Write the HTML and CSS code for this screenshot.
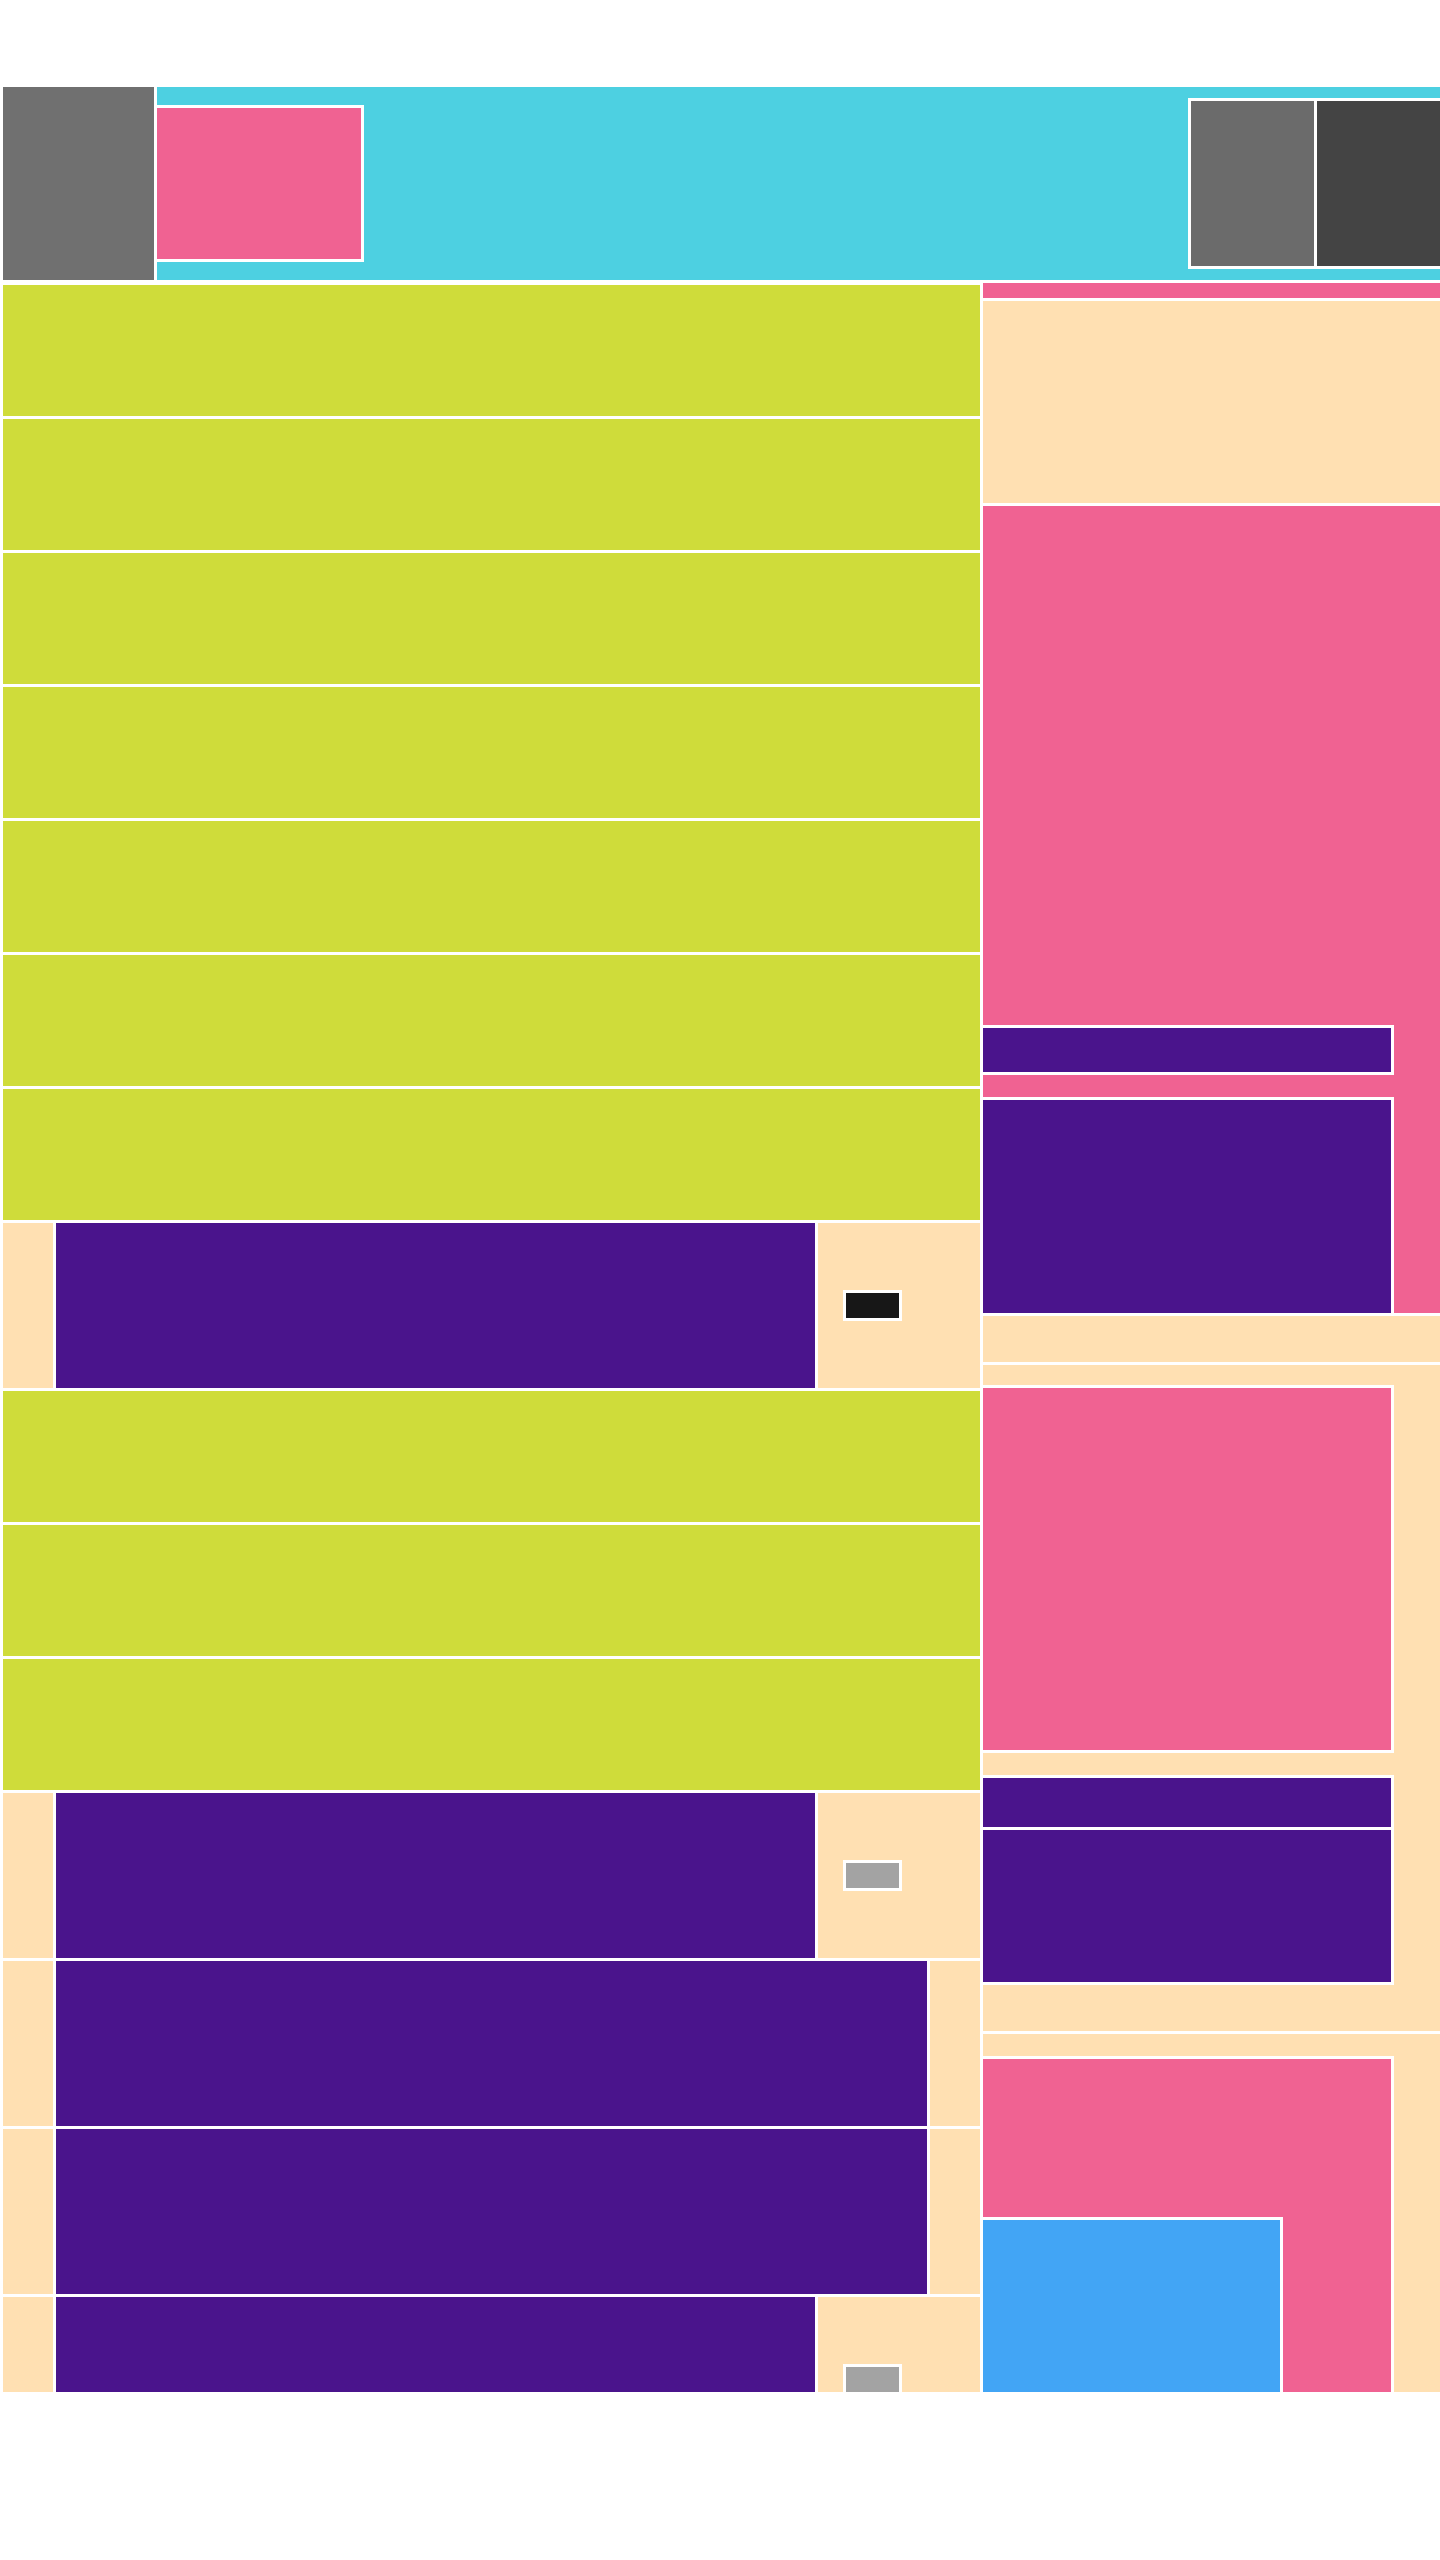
FILE: index.html
```html
<!DOCTYPE html>
<html lang="en">
<head>
  <meta charset="UTF-8">
  <meta name="viewport" content="width=device-width, initial-scale=1.0">
  <title>Layout</title>
  <link rel="stylesheet" href="styles.css">
</head>
<body>
  <div class="page">
    <header class="header">
      <div class="logo"></div>
      <div class="nav">
        <div class="nav-brand"></div>
        <div class="nav-actions">
          <div class="btn btn-light"></div>
          <div class="btn btn-dark"></div>
        </div>
      </div>
    </header>

    <main class="main">
      <div class="list">
        <div class="row-lime"></div>
        <div class="row-lime"></div>
        <div class="row-lime"></div>
        <div class="row-lime"></div>
        <div class="row-lime"></div>
        <div class="row-lime"></div>
        <div class="row-lime"></div>

        <div class="row-item">
          <div class="item-side"></div>
          <div class="item-body"></div>
          <div class="item-meta"><span class="tag tag-black"></span></div>
        </div>

        <div class="row-lime"></div>
        <div class="row-lime"></div>
        <div class="row-lime"></div>

        <div class="row-item">
          <div class="item-side"></div>
          <div class="item-body"></div>
          <div class="item-meta"><span class="tag tag-grey"></span></div>
        </div>

        <div class="row-item">
          <div class="item-side"></div>
          <div class="item-body item-body-wide"></div>
          <div class="item-side"></div>
        </div>

        <div class="row-item">
          <div class="item-side"></div>
          <div class="item-body item-body-wide"></div>
          <div class="item-side"></div>
        </div>

        <div class="row-item">
          <div class="item-side"></div>
          <div class="item-body"></div>
          <div class="item-meta"><span class="tag tag-grey"></span></div>
        </div>
      </div>

      <aside class="sidebar">
        <div class="side-strip"></div>
        <div class="side-peach side-intro"></div>

        <div class="side-pink side-feature">
          <div class="card card-purple card-bar"></div>
          <div class="card card-purple card-feature"></div>
        </div>

        <div class="side-peach side-spacer"></div>

        <div class="side-peach side-group">
          <div class="card card-pink card-hero"></div>
          <div class="card card-purple card-title"></div>
          <div class="card card-purple card-text"></div>
        </div>

        <div class="side-peach side-last">
          <div class="card card-pink card-media">
            <div class="card card-blue card-inner"></div>
          </div>
        </div>
      </aside>
    </main>
  </div>
</body>
</html>
```

FILE: styles.css
```css
body {
  margin: 0;
  background: #fff;
}
.page {
  padding-top: 87px;
}

/* header */
.header {
  display: flex;
  gap: 3px;
  height: 193px;
  padding-left: 3px;
  margin-bottom: 3px;
}
.logo {
  width: 151px;
  background: #707070;
}
.nav {
  flex: 1;
  display: flex;
  align-items: flex-start;
  background: #4dd0e1;
}
.nav-brand {
  width: 204px;
  height: 151px;
  margin-top: 18px;
  background: #f06292;
  border: 3px solid #fff;
  border-left: 0;
}
.nav-actions {
  display: flex;
  gap: 3px;
  margin-left: auto;
  margin-top: 11px;
  padding: 3px 0 3px 3px;
  background: #fff;
}
.btn {
  width: 123px;
  height: 165px;
}
.btn-light {
  background: #6b6b6b;
}
.btn-dark {
  background: #444;
}

/* main */
.main {
  display: flex;
  gap: 3px;
  height: 2109px;
  padding-left: 3px;
  overflow: hidden;
}
.list {
  width: 977px;
  margin-top: 2px;
  display: flex;
  flex-direction: column;
  gap: 3px;
}
.row-lime {
  height: 131px;
  flex-shrink: 0;
  background: #cfdc3a;
}
.row-item {
  display: flex;
  gap: 3px;
  height: 165px;
  flex-shrink: 0;
}
.item-side {
  width: 50px;
  background: #ffe0b2;
}
.item-body {
  width: 759px;
  background: #4a148c;
}
.item-body-wide {
  width: 871px;
}
.item-meta {
  flex: 1;
  display: flex;
  align-items: center;
  padding-left: 25px;
  background: #ffe0b2;
}
.tag {
  display: block;
  width: 53px;
  height: 25px;
  border: 3px solid #fff;
}
.tag-black {
  background: #171717;
}
.tag-grey {
  background: #a3a3a3;
}

/* sidebar */
.sidebar {
  flex: 1;
  display: flex;
  flex-direction: column;
  gap: 3px;
}
.side-strip {
  height: 15px;
  background: #f06292;
}
.side-peach {
  background: #ffe0b2;
}
.side-pink {
  background: #f06292;
}
.side-intro {
  height: 202px;
}
.side-feature {
  height: 807px;
  padding-top: 519px;
  box-sizing: border-box;
  overflow: hidden;
}
.side-spacer {
  height: 46px;
}
.side-group {
  height: 666px;
  padding-top: 20px;
  box-sizing: border-box;
}
.side-last {
  height: 358px;
  padding-top: 22px;
  box-sizing: border-box;
  overflow: hidden;
}

.card {
  width: 408px;
  border: 3px solid #fff;
  border-left: 0;
}
.card-purple {
  background: #4a148c;
}
.card-pink {
  background: #f06292;
}
.card-blue {
  background: #42a5f5;
}
.card-bar {
  height: 44px;
  margin-bottom: 22px;
}
.card-feature {
  height: 213px;
}
.card-hero {
  height: 362px;
  margin-bottom: 22px;
}
.card-title {
  height: 49px;
  border-bottom: 0;
}
.card-text {
  height: 152px;
}
.card-media {
  height: 242px;
  padding-top: 158px;
}
.card-inner {
  width: 297px;
  height: 200px;
  border-bottom: 0;
}
```
